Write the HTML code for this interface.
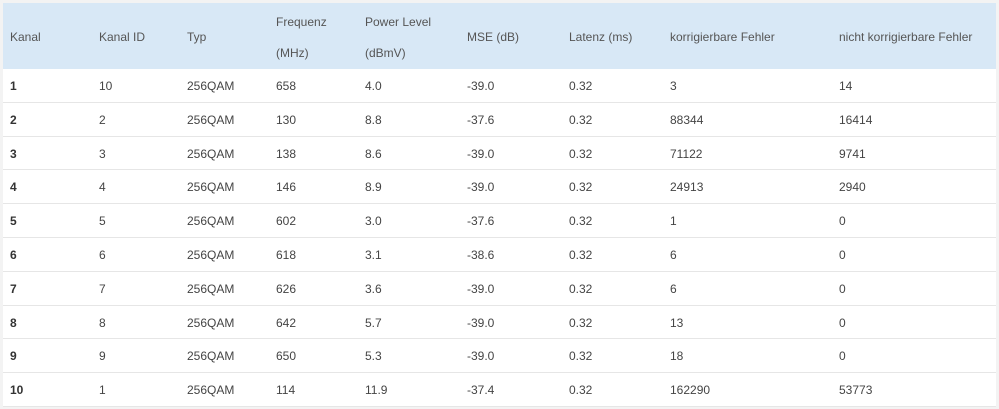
<!DOCTYPE html><html><head><style>
body{margin:0;background:#f3f3f3;width:999px;height:409px;overflow:hidden;font-family:"Liberation Sans",sans-serif;font-size:12px;color:#444}
.t{position:absolute;left:3px;top:3px;width:993px;background:#fff}
.h{height:66px;background:#d8e8f6;position:relative;color:#555}
.r{height:33px;border-bottom:1px solid #e6e6e6;position:relative;box-sizing:border-box;height:33.8px}
span{position:absolute;white-space:nowrap}
.r span{top:10px}
.h span{top:27px}
.h span.a{top:12px}.h span.b{top:43px}
.r span:first-child{font-weight:bold;color:#333}
</style></head><body><div class="t">
<div class="h"><span style="left:7px">Kanal</span><span style="left:96px">Kanal ID</span><span style="left:184px">Typ</span><span class="a" style="left:273px">Frequenz</span><span class="b" style="left:273px">(MHz)</span><span class="a" style="left:362px">Power Level</span><span class="b" style="left:362px">(dBmV)</span><span style="left:464px">MSE (dB)</span><span style="left:566px">Latenz (ms)</span><span style="left:667px">korrigierbare Fehler</span><span style="left:836px">nicht korrigierbare Fehler</span></div>
<div id="rows"></div>
</div>
<script>
var d=[[1,10,658,"4.0","-39.0",3,14],[2,2,130,"8.8","-37.6",88344,16414],[3,3,138,"8.6","-39.0",71122,9741],[4,4,146,"8.9","-39.0",24913,2940],[5,5,602,"3.0","-37.6",1,0],[6,6,618,"3.1","-38.6",6,0],[7,7,626,"3.6","-39.0",6,0],[8,8,642,"5.7","-39.0",13,0],[9,9,650,"5.3","-39.0",18,0],[10,1,114,"11.9","-37.4",162290,53773]];
var h="";d.forEach(function(r){h+='<div class="r"><span style="left:7px">'+r[0]+'</span><span style="left:96px">'+r[1]+'</span><span style="left:184px">256QAM</span><span style="left:273px">'+r[2]+'</span><span style="left:362px">'+r[3]+'</span><span style="left:464px">'+r[4]+'</span><span style="left:566px">0.32</span><span style="left:667px">'+r[5]+'</span><span style="left:836px">'+r[6]+'</span></div>'});
document.getElementById("rows").innerHTML=h;
</script></body></html>
